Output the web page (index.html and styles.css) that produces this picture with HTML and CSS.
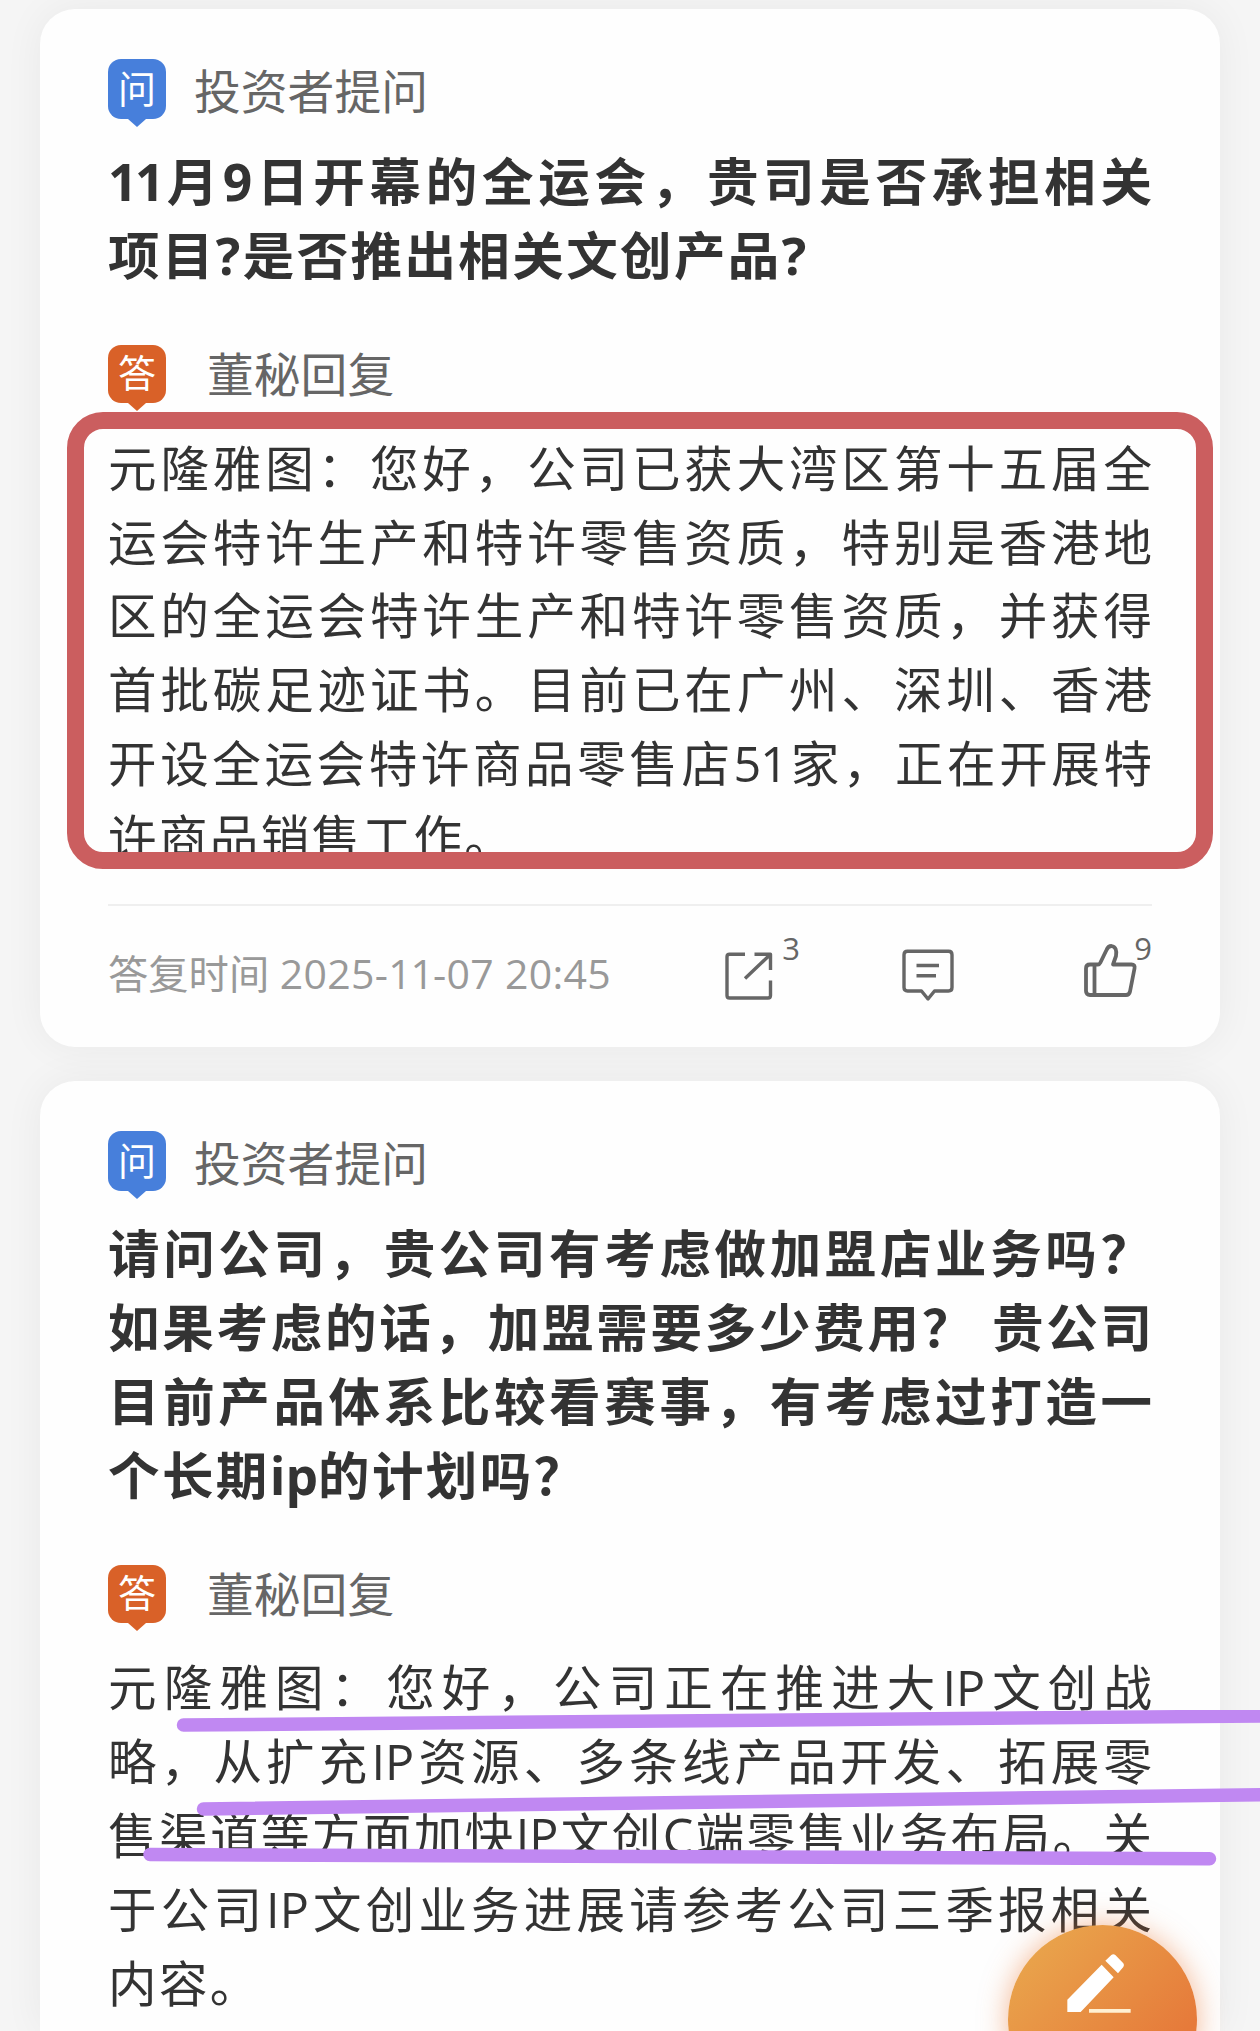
FILE: index.html
```html
<!DOCTYPE html>
<html lang="zh-CN">
<head>
<meta charset="utf-8">
<title>投资者问答</title>
<link rel="stylesheet" href="styles.css">
</head>
<body>
<div class="screen">
<main class="feed">
  <article class="card">
    <header class="head">
      <span class="tag tag-ask"><span class="tag-char">问</span></span>
      <span class="label">投资者提问</span>
    </header>
    <h2 class="question">
      <span class="line"><span class="ones">11</span>月9日开幕的全运会，贵司是否承担相关</span>
      <span class="line last">项目?是否推出相关文创产品?</span>
    </h2>
    <header class="head head-reply">
      <span class="tag tag-reply"><span class="tag-char">答</span></span>
      <span class="label">董秘回复</span>
    </header>
    <div class="answer boxed">
      <span class="line">元隆雅图：您好，公司已获大湾区第十五届全</span>
      <span class="line">运会特许生产和特许零售资质，特别是香港地</span>
      <span class="line">区的全运会特许生产和特许零售资质，并获得</span>
      <span class="line">首批碳足迹证书。目前已在广州、深圳、香港</span>
      <span class="line">开设全运会特许商品零售店<span class="number">51</span>家，正在开展特</span>
      <span class="line last">许商品销售工作。</span>
    </div>
    <footer class="foot">
      <time class="time">答复时间 <span class="stamp">2025-<span class="ones">11</span>-07 20:45</span></time>
      <span class="action share">
        <svg width="48" height="49" viewBox="0 0 48 49"><path d="M20 2.2H4.5Q2 2.2 2 4.7V43.500Q2 46 4.500 46H43Q45.500 46 45.500 43.500V28.500M29.500 2.200H45.500V18M45 2.700L20 26.500"/></svg>
        <sup class="count">3</sup>
      </span>
      <span class="action comment">
        <svg width="52" height="52" viewBox="0 0 52 52"><path d="M5.500 2.200H46.500Q50 2.200 50 5.700V38.500Q50 42 46.500 42H32.500L26 50L19.500 42H5.500Q2 42 2 38.500V5.700Q2 2.200 5.500 2.200ZM14.500 16.500H37M14.500 26.800H34"/></svg>
      </span>
      <span class="action like">
        <svg width="53" height="53" viewBox="0 0 53 53"><path class="bold" d="M6 20.500H14Q15.500 20.500 16.300 18.800L22.500 6Q24 2 27.500 2Q33.500 3 32 12L29 20.500H47.500Q51.300 20.500 50.500 24.500L46 47.500Q45.200 51 42 51H6Q2 51 2 47V24.500Q2 20.500 6 20.500ZM10.500 20.500V51"/></svg>
        <sup class="count">9</sup>
      </span>
    </footer>
  </article>

  <article class="card card-open">
    <header class="head">
      <span class="tag tag-ask"><span class="tag-char">问</span></span>
      <span class="label">投资者提问</span>
    </header>
    <h2 class="question">
      <span class="line">请问公司，贵公司有考虑做加盟店业务吗？</span>
      <span class="line">如果考虑的话，加盟需要多少费用？ 贵公司</span>
      <span class="line">目前产品体系比较看赛事，有考虑过打造一</span>
      <span class="line last">个长期<span class="tight">ip</span>的计划吗？</span>
    </h2>
    <header class="head head-reply">
      <span class="tag tag-reply"><span class="tag-char">答</span></span>
      <span class="label">董秘回复</span>
    </header>
    <div class="answer">
      <span class="line">元隆雅图：您好，公司正在推进大IP文创战</span>
      <span class="line">略，从扩充IP资源、多条线产品开发、拓展零</span>
      <span class="line">售渠道等方面加快IP文创C端零售业务布局。关</span>
      <span class="line">于公司IP文创业务进展请参考公司三季报相关</span>
      <span class="line last">内容。</span>
    </div>
  </article>
</main>

<svg class="marks" width="1260" height="160" viewBox="0 1710 1260 160">
  <path d="M183.500 1725L1270 1716M203.500 1809L1270 1794.500M150 1854.500L1209.500 1858.700"/>
</svg>

<button class="compose" aria-label="提问">
  <svg width="66" height="60" viewBox="0 0 198 180"><path d="M4 140L107 35L143 73L44 177H4ZM118 23L136 6Q142 2 148 6L172 31Q176 36 172 42L156 61Z"/><path class="rule" d="M69 168H194V179H69Z"/></svg>
</button>
</div>
</body>
</html>
```
FILE: styles.css
```css
*, *::before, *::after { box-sizing: border-box; }

body { margin: 0; }

.screen {
  position: relative;
  height: 2031px;
  overflow: hidden;
  background: #f5f5f5;
  color: #333;
  font-family: "Open Sans", "Noto Sans CJK SC", sans-serif;
  text-spacing-trim: space-all;
}

.feed {
  display: flex;
  flex-direction: column;
  gap: 34px;
  padding: 9px 40px 0;
}

.card {
  height: 1038px;
  padding: 50px 68px 0 68px;
  border-radius: 35px;
  background: #fefefe;
  box-shadow: 0 0 40px rgba(0, 0, 0, 0.055);
}

.card-open {
  height: 950px;
  border-radius: 35px 35px 0 0;
}

.head {
  display: flex;
  align-items: flex-start;
  gap: 28px;
  height: 68px;
}

.head-reply {
  gap: 41px;
  height: 66px;
  margin-top: 53px;
}

.tag {
  position: relative;
  width: 58px;
  height: 60px;
  border-radius: 13px;
  color: #fff;
  text-align: center;
  font-size: 38px;
  line-height: 58px;
}

.tag::after {
  content: "";
  position: absolute;
  left: 20px;
  top: 100%;
  border: solid transparent;
  border-width: 8px 9px 0;
}

.tag-ask { background: #477fdb; }
.tag-ask::after { border-top-color: #477fdb; }
.tag-reply { height: 58px; line-height: 55px; background: #d96128; }
.tag-reply::after { border-top-color: #d96128; }

.label {
  color: #666;
  font-size: 46.8px;
  line-height: 65px;
}

.head-reply .label { line-height: 58px; }

.question {
  margin: 17px 0 0;
  font-size: 51.5px;
  font-weight: 700;
  line-height: 74px;
}

.answer {
  margin-top: 19px;
  font-size: 48.5px;
  line-height: 74px;
}

.line {
  display: block;
  white-space: nowrap;
  text-align-last: justify;
}

.last {
  text-align-last: left;
  letter-spacing: 2.4px;
}

.ones { letter-spacing: -2.5px; }
.number { letter-spacing: -1px; }
.tight { letter-spacing: 0; }

.boxed {
  position: relative;
  height: 444px;
  padding-top: 2px;
  line-height: 73.7px;
}

.boxed::after {
  content: "";
  position: absolute;
  left: -41px;
  top: -18px;
  width: 1146px;
  height: 457px;
  border: 17px solid #cb5e5f;
  border-radius: 36px;
}

.foot {
  display: flex;
  align-items: flex-start;
  margin-top: 30px;
  padding-top: 38px;
  border-top: 2px solid #efefef;
}

.time {
  width: 619px;
  color: #999;
  font-size: 40.3px;
  line-height: 58px;
  white-space: nowrap;
}

.stamp {
  font-size: 41px;
  letter-spacing: 0.3px;
}

.stamp .ones { letter-spacing: -1px; }

.action {
  display: flex;
  padding-top: 8px;
}

.share { width: 177px; }
.comment { width: 183px; padding-top: 5px; }
.like { padding-top: 0; }

.action svg {
  flex: none;
  fill: none;
  stroke: #666;
  stroke-width: 3.4;
  stroke-linejoin: round;
}

.action .bold { stroke-width: 3.8; }

.count {
  margin: -22px 0 0 9px;
  color: #666;
  font-size: 31px;
  line-height: 36px;
}

.like .count { margin: -14px 0 0 -3px; }

.marks {
  position: absolute;
  left: 0;
  top: 1710px;
  fill: none;
  stroke: #c088f2;
  stroke-width: 13.5;
  stroke-linecap: round;
}

.compose {
  position: absolute;
  left: 1008px;
  top: 1925px;
  display: flex;
  justify-content: center;
  width: 189px;
  height: 189px;
  padding: 28px 8px 0 0;
  border: 0;
  border-radius: 50%;
  background: linear-gradient(135deg, #e9a54c 10%, #e67a3a 75%);
  box-shadow: 0 0 28px rgba(235, 115, 45, 0.5);
}

.compose svg { fill: #fff; }
.compose .rule { fill: #fff0d2; }
```
